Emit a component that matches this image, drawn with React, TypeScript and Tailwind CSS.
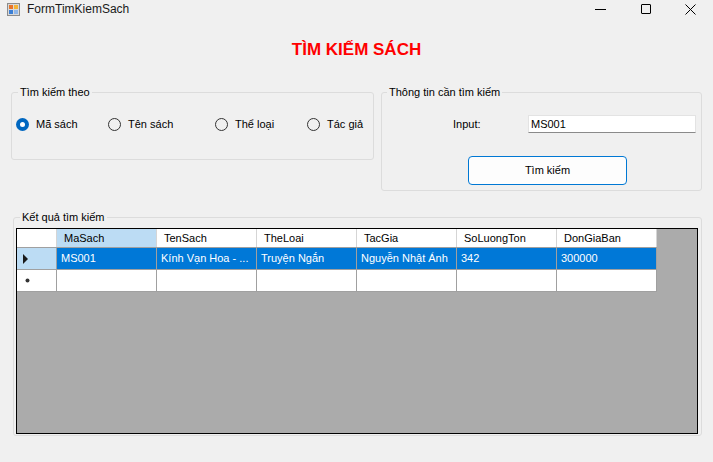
import React from 'react'

const columns = ['MaSach', 'TenSach', 'TheLoai', 'TacGia', 'SoLuongTon', 'DonGiaBan']
const row = ['MS001', 'Kính Vạn Hoa - ...', 'Truyện Ngắn', 'Nguyễn Nhật Ánh', '342', '300000']

function Radio({ label, checked, width }: { label: string; checked?: boolean; width: string }) {
  return (
    <div className={`flex items-center gap-[7px] ${width}`}>
      {checked ? (
        <span className="w-[13px] h-[13px] rounded-full bg-[#0067c0] flex items-center justify-center">
          <span className="w-[5px] h-[5px] rounded-full bg-white" />
        </span>
      ) : (
        <span className="w-[13px] h-[13px] rounded-full border border-[#333333]" />
      )}
      <span className="leading-[14px]">{label}</span>
    </div>
  )
}

function AppIcon() {
  return (
    <svg width="13" height="13" viewBox="0 0 13 13">
      <rect x="0.5" y="0.5" width="12" height="12" fill="#d9d9d9" stroke="#8c8c8c" />
      <rect x="2" y="2" width="4" height="4" fill="#e8742a" />
      <rect x="7" y="2" width="4" height="4" fill="#f5b335" />
      <rect x="2" y="7" width="4" height="4" fill="#3a7fd6" />
      <rect x="7" y="7" width="4" height="4" fill="#8fb6e8" />
    </svg>
  )
}

export default function App() {
  return (
    <div className="w-[713px] h-[462px] bg-[#f0f0f0] overflow-hidden text-[11px] text-black font-['Liberation_Sans',Arial,sans-serif]">
      {/* title bar */}
      <div className="h-[18px] flex items-center">
        <div className="ml-[7px]">
          <AppIcon />
        </div>
        <span className="ml-[7px] text-[12px] leading-[14px] text-[#1a1a1a]">FormTimKiemSach</span>
        <div className="ml-auto flex h-full">
          <div className="w-[50px] flex items-center justify-center">
            <span className="w-[11px] h-px bg-black" />
          </div>
          <div className="w-[42px] flex items-center justify-center">
            <span className="w-[10px] h-[10px] border border-black rounded-[1px]" />
          </div>
          <div className="w-[46px] flex items-center justify-center">
            <svg width="11" height="11" viewBox="0 0 11 11">
              <path d="M0.5 0.5 L10.5 10.5 M10.5 0.5 L0.5 10.5" stroke="black" strokeWidth="1" />
            </svg>
          </div>
        </div>
      </div>

      {/* heading */}
      <div className="h-[67px] pt-[22px] flex justify-center">
        <h1 className="text-[17px] leading-[19px] font-bold text-[#ff0000]">TÌM KIẾM SÁCH</h1>
      </div>

      {/* search options */}
      <div className="flex items-start ml-[11px] gap-[7px]">
        <fieldset className="w-[363px] border border-[#dcdcdc] rounded-[3px] pl-[4px] pt-[17px] pb-[27px]">
          <legend className="ml-[2px] px-[2px] leading-[14px]">Tìm kiếm theo</legend>
          <div className="flex items-center h-[16px]">
            <Radio label="Mã sách" checked width="w-[92px]" />
            <Radio label="Tên sách" width="w-[107px]" />
            <Radio label="Thể loại" width="w-[92px]" />
            <Radio label="Tác giả" width="w-[60px]" />
          </div>
        </fieldset>

        <fieldset className="w-[321px] border border-[#dcdcdc] rounded-[3px] pt-[16px] pb-[5px]">
          <legend className="ml-[5px] px-[2px] leading-[14px]">Thông tin cần tìm kiếm</legend>
          <div className="flex items-center h-[18px]">
            <span className="ml-[71px] w-[75px]">Input:</span>
            <div className="w-[168px] h-[18px] bg-white border border-[#e3e3e3] border-b-[#8a8a8a] pl-[2px] flex items-center">
              MS001
            </div>
          </div>
          <button className="mt-[23px] ml-[86px] w-[159px] h-[29px] rounded-[4px] border border-[#0078d4] bg-[#fdfdfd] flex items-center justify-center">
            Tìm kiếm
          </button>
        </fieldset>
      </div>

      {/* results */}
      <fieldset className="mt-[19px] ml-[13px] w-[689px] border border-[#dcdcdc] rounded-[3px] pt-[4px] pb-[1px]">
        <legend className="ml-[6px] px-[2px] leading-[14px]">Kết quả tìm kiếm</legend>
        <div className="ml-[2px] w-[682px] h-[206px] border border-black bg-[#ababab]">
          {/* header row */}
          <div className="flex h-[19px] w-[640px] border-b border-[#a0a0a0] bg-white">
            <div className="w-[40px] border-r border-[#d5d5d5]" />
            {columns.map((c, i) => (
              <div
                key={c}
                className={`w-[100px] border-r border-[#d5d5d5] pl-[7px] flex items-center ${i === 0 ? 'bg-[#bcdcf4]' : ''}`}
              >
                {c}
              </div>
            ))}
          </div>
          {/* data row */}
          <div className="flex h-[22px] w-[640px] border-b border-[#a0a0a0]">
            <div className="w-[40px] border-r border-[#a0a0a0] bg-[#bcdcf4] pl-[6px] flex items-center">
              <svg width="5" height="10" viewBox="0 0 5 10">
                <path d="M0 0 L5 5 L0 10 Z" fill="#1a1a1a" />
              </svg>
            </div>
            {row.map((v, i) => (
              <div
                key={i}
                className="w-[100px] border-r border-[#a0a0a0] bg-[#0078d7] text-white pl-[4px] flex items-center whitespace-nowrap overflow-hidden"
              >
                {v}
              </div>
            ))}
          </div>
          {/* new row */}
          <div className="flex h-[22px] w-[640px] border-b border-[#a0a0a0] bg-white">
            <div className="w-[40px] border-r border-[#a0a0a0] pl-[8px] flex items-center">
              <svg width="5" height="5" viewBox="0 0 5 5">
                <circle cx="2.5" cy="2.5" r="2" fill="#333333" />
              </svg>
            </div>
            {columns.map((c) => (
              <div key={c} className="w-[100px] border-r border-[#a0a0a0]" />
            ))}
          </div>
        </div>
      </fieldset>
    </div>
  )
}
